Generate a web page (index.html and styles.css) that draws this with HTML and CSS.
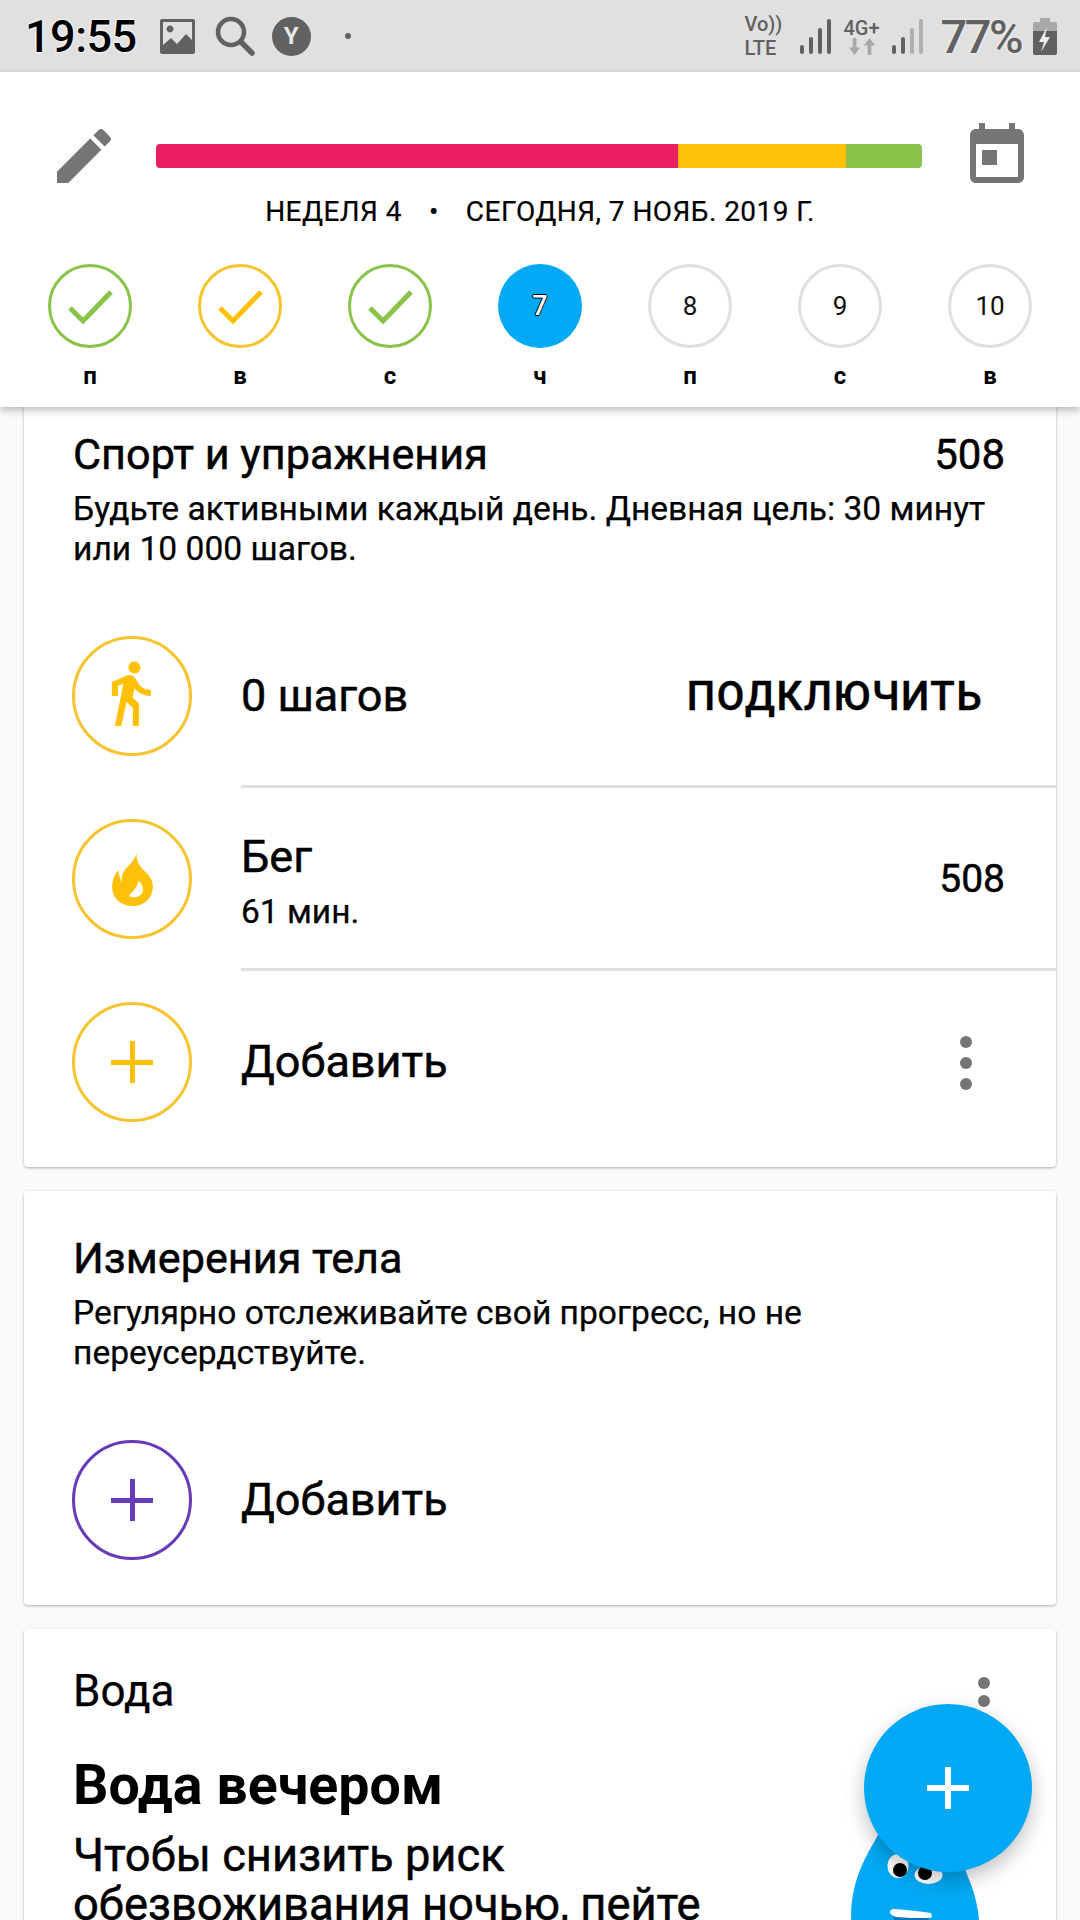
FILE: index.html
```html
<!DOCTYPE html>
<html lang="ru">
<head>
    <meta charset="UTF-8">
    <meta name="viewport" content="width=device-width, initial-scale=1.0">
    <title>Дневник</title>
    <link rel="stylesheet" href="styles.css">
</head>
<body>
    <div class="statusbar">
        <div class="status-left">
            <span class="time">19:55</span>
            <svg class="st-img" viewBox="0 0 35 35"><path fill="#616161" fill-rule="evenodd" d="M2 0h31a2 2 0 0 1 2 2v31a2 2 0 0 1-2 2H2a2 2 0 0 1-2-2V2a2 2 0 0 1 2-2zM3 3v23l8-7 6 6 9-10 6 6V3zM10 6.500a3.500 3.500 0 1 0 .01 0z"/></svg>
            <svg class="st-search" viewBox="0 0 40 40"><circle cx="16" cy="16" r="13" fill="none" stroke="#616161" stroke-width="4.500"/><path d="M26 26l11 11" stroke="#616161" stroke-width="5.500" stroke-linecap="round"/></svg>
            <span class="st-y">Y</span>
            <span class="st-dot"></span>
        </div>
        <div class="status-right">
            <span class="volte">Vo))<br>LTE</span>
            <svg class="st-signal" viewBox="0 0 31 35"><g fill="#616161"><rect x="0" y="26" width="4" height="9" rx="2"/><rect x="9" y="18" width="4" height="17" rx="2"/><rect x="18" y="9" width="4" height="26" rx="2"/><rect x="27" y="0" width="4" height="35" rx="2"/></g></svg>
            <span class="net">4G+<svg viewBox="0 0 30 18"><path fill="#a8a8a8" d="M5 0h4v10h4l-6 8-6-8h4zM21 18h4V8h4l-6-8-6 8h4z"/></svg></span>
            <svg class="st-signal" viewBox="0 0 31 35"><g fill="#616161"><rect x="0" y="26" width="4" height="9" rx="2"/><rect x="9" y="18" width="4" height="17" rx="2"/></g><g fill="#b0b0b0"><rect x="18" y="9" width="4" height="26" rx="2"/><rect x="27" y="0" width="4" height="35" rx="2"/></g></svg>
            <span class="percent">77%</span>
            <svg class="st-batt" viewBox="0 0 24 37"><path fill="#a8a8a8" d="M7 0h10v4h5a2 2 0 0 1 2 2v8H0V6a2 2 0 0 1 2-2h5z"/><path fill="#616161" d="M0 13h24v22a2 2 0 0 1-2 2H2a2 2 0 0 1-2-2z"/><path fill="#eee" d="M14 9l-8 15h5l-3 10 9-15h-5z"/></svg>
        </div>
    </div>

    <header class="header">
        <div class="progress-row">
            <svg class="pencil" viewBox="0 0 24 24"><path fill="#757575" d="M3 17.250V21h3.750L17.810 9.940l-3.750-3.750L3 17.250zM20.710 7.040c.39-.39.39-1.020 0-1.410l-2.340-2.340c-.39-.39-1.020-.39-1.410 0l-1.830 1.830 3.750 3.750 1.830-1.830z"/></svg>
            <div class="progress">
                <div class="seg seg-red"></div>
                <div class="seg seg-yellow"></div>
                <div class="seg seg-green"></div>
            </div>
            <svg class="calendar" viewBox="0 0 24 24"><path fill="#757575" d="M7 10h5v5H7zM16 1v2H8V1H6v2H5c-1.110 0-1.990.9-1.990 2L3 19c0 1.100.89 2 2 2h14c1.100 0 2-.9 2-2V5c0-1.100-.9-2-2-2h-1V1h-2zm3 18H5V8h14v11z"/></svg>
        </div>
        <div class="week-line"><span>НЕДЕЛЯ 4</span><span class="bullet">•</span><span>СЕГОДНЯ, 7 НОЯБ. 2019 Г.</span></div>
        <div class="days">
            <div class="day"><div class="circle c-green"><svg viewBox="0 0 84 84"><path d="M22 44l13 13 28-29" fill="none" stroke="#8bc34a" stroke-width="5"/></svg></div><span class="day-name">п</span></div>
            <div class="day"><div class="circle c-yellow"><svg viewBox="0 0 84 84"><path d="M22 44l13 13 28-29" fill="none" stroke="#ffc107" stroke-width="5"/></svg></div><span class="day-name">в</span></div>
            <div class="day"><div class="circle c-green"><svg viewBox="0 0 84 84"><path d="M22 44l13 13 28-29" fill="none" stroke="#8bc34a" stroke-width="5"/></svg></div><span class="day-name">с</span></div>
            <div class="day"><div class="circle c-today">7</div><span class="day-name">ч</span></div>
            <div class="day"><div class="circle">8</div><span class="day-name">п</span></div>
            <div class="day"><div class="circle">9</div><span class="day-name">с</span></div>
            <div class="day"><div class="circle">10</div><span class="day-name">в</span></div>
        </div>
    </header>

    <main class="content">
        <section class="card card-sport">
            <div class="card-head">
                <h2>Спорт и упражнения</h2>
                <span class="score">508</span>
            </div>
            <p class="desc">Будьте активными каждый день. Дневная цель: 30 минут<br>или 10 000 шагов.</p>
            <div class="rows">
                <div class="row">
                    <div class="round"><svg class="walk" viewBox="0.700 1 24 24"><path fill="#ffc107" d="M13.500 5.500c1.100 0 2-.9 2-2s-.9-2-2-2-2 .9-2 2 .9 2 2 2zM9.800 8.900L7 23h2.100l1.800-8 2.100 2v6h2v-7.500l-2.100-2 .6-3C14.800 12 16.800 13 19 13v-2c-1.900 0-3.500-1-4.300-2.400l-1-1.600c-.4-.6-1-1-1.700-1-.3 0-.5.1-.8.1L6 8.300V13h2V9.600l1.800-.7"/></svg></div>
                    <div class="row-body line">
                        <span class="row-title">0 шагов</span>
                        <span class="connect">ПОДКЛЮЧИТЬ</span>
                    </div>
                </div>
                <div class="row">
                    <div class="round"><svg class="flame" viewBox="5 22 123 160"><path fill="#ffc107" fill-rule="evenodd" d="M78 22C74 50 45 62 36 88c-4 12-2 20 0 26-6-10-10-24-12-40C10 90 5 108 5 125c0 33 25 57 61 57s62-24 62-60c0-27-23-42-36-57-10-13-14-27-14-43zM85 105c-3 20-17 33-30 47 15 6 33 6 41-10 6-14-1-27-11-37z"/></svg></div>
                    <div class="row-body line">
                        <div class="row-text">
                            <span class="row-title">Бег</span>
                            <span class="row-sub">61 мин.</span>
                        </div>
                        <span class="row-score">508</span>
                    </div>
                </div>
                <div class="row">
                    <div class="round"><span class="plus"></span></div>
                    <div class="row-body">
                        <span class="row-title">Добавить</span>
                        <span class="dots"><i></i><i></i><i></i></span>
                    </div>
                </div>
            </div>
        </section>

        <section class="card card-body">
            <div class="card-head">
                <h2>Измерения тела</h2>
            </div>
            <p class="desc">Регулярно отслеживайте свой прогресс, но не<br>переусердствуйте.</p>
            <div class="rows">
                <div class="row">
                    <div class="round r-purple"><span class="plus"></span></div>
                    <div class="row-body">
                        <span class="row-title">Добавить</span>
                    </div>
                </div>
            </div>
        </section>

        <section class="card card-water">
            <div class="water-head">
                <span class="water-name">Вода</span>
                <span class="dots dots-water"><i></i><i></i><i></i></span>
            </div>
            <h3>Вода вечером</h3>
            <p class="water-text">Чтобы снизить риск<br>обезвоживания ночью, пейте</p>
            <svg class="mascot" viewBox="0 0 128 180">
                <path fill="#03a9f4" d="M64 0C40 0 30 35 27 45 18 62 1 85 0 125c0 35 30 55 64 55s64-20 64-50c-1-15-6-32-11-43C108 60 88 0 64 0z"/>
                <ellipse cx="47" cy="76" rx="10.500" ry="12" fill="#fff"/>
                <ellipse cx="77.500" cy="85" rx="14" ry="9" fill="#fff"/>
                <circle cx="49" cy="80" r="7" fill="#000"/>
                <circle cx="74" cy="83" r="7" fill="#000"/>
                <path fill="#0277bd" d="M42 126l36 2-4 12H46z"/>
                <path fill="#fff" d="M39 122c0-2 2-3 4-3 13 1 26 2 37 4l1 4c-1 1-2 1-3 1-12 0-24 0-33-1-3-1-6-3-6-5z"/>
            </svg>
        </section>
    </main>

    <button class="fab"><span class="plus"></span></button>
</body>
</html>
```
FILE: styles.css
```css
html, body {
    margin: 0;
    padding: 0;
}
body {
    position: relative;
    width: 1080px;
    height: 1920px;
    overflow: hidden;
    background: #fafafa;
    font-family: Roboto, "Noto Sans", sans-serif;
    color: #000;
}
svg {
    display: block;
}

/* status bar */
.statusbar {
    height: 72px;
    background: #e0e0e0;
    display: flex;
    justify-content: space-between;
    align-items: center;
    padding: 0 23px 0 25px;
    box-sizing: border-box;
}
.status-left, .status-right {
    display: flex;
    align-items: center;
}
.time {
    font-size: 45px;
    font-weight: 500;
    letter-spacing: -0.5px;
    text-shadow: 0 0 3px #fff, 0 0 2px #fff;
    margin-right: 23px;
}
.st-img {
    width: 35px;
    height: 35px;
    margin-right: 20px;
}
.st-search {
    width: 40px;
    height: 40px;
    margin-right: 17px;
}
.st-y {
    width: 39px;
    height: 39px;
    border-radius: 50%;
    background: #616161;
    color: #e8e8e8;
    font-size: 24px;
    font-weight: 700;
    line-height: 39px;
    text-align: center;
    margin-right: 34px;
}
.st-dot {
    width: 6px;
    height: 6px;
    border-radius: 50%;
    background: #616161;
}
.volte {
    font-size: 20px;
    line-height: 24px;
    font-weight: 500;
    color: #616161;
    margin-right: 20px;
    width: 36px;
}
.st-signal {
    width: 31px;
    height: 35px;
}
.net {
    font-size: 20px;
    line-height: 20px;
    font-weight: 500;
    color: #616161;
    margin: 0 12px 0 12px;
    width: 37px;
}
.net svg {
    width: 28px;
    height: 17px;
    margin: 0 auto;
}
.percent {
    font-size: 47px;
    font-weight: 500;
    letter-spacing: -2.5px;
    color: #616161;
    text-shadow: 0 0 3px #fff;
    margin: 0 12px 0 17px;
}
.st-batt {
    width: 24px;
    height: 37px;
}

/* top panel */
.header {
    position: relative;
    z-index: 2;
    height: 335px;
    box-sizing: border-box;
    padding-top: 48px;
    background: #fff;
    box-shadow: 0 3px 8px rgba(0, 0, 0, .28);
}
.progress-row {
    display: flex;
    align-items: center;
    padding: 0 47px 0 48px;
}
.pencil, .calendar {
    width: 72px;
    height: 72px;
    flex: none;
}
.progress {
    flex: 1;
    display: flex;
    height: 24px;
    margin: 0 39px 0 36px;
    border-radius: 4px;
    overflow: hidden;
}
.seg-red {
    width: 522px;
    background: #e91e63;
}
.seg-yellow {
    width: 168px;
    background: #ffc107;
}
.seg-green {
    flex: 1;
    background: #8bc34a;
}
.week-line {
    display: flex;
    justify-content: center;
    font-size: 28px;
    line-height: 40px;
    letter-spacing: .45px;
    -webkit-text-stroke: .2px #000;
}
.bullet {
    margin: 0 27px;
}
.days {
    display: grid;
    grid-template-columns: repeat(7, 150px);
    padding: 32px 15px 0;
}
.day {
    display: flex;
    flex-direction: column;
    align-items: center;
}
.circle {
    width: 84px;
    height: 84px;
    box-sizing: border-box;
    border: 3px solid #e0e0e0;
    border-radius: 50%;
    display: flex;
    align-items: center;
    justify-content: center;
    font-size: 26px;
    color: #111;
}
.circle svg {
    flex: none;
    width: 84px;
    height: 84px;
}
.c-green {
    border-color: #8bc34a;
}
.c-yellow {
    border-color: #f7c32f;
}
.c-today {
    border: 0;
    background: #03a9f4;
    color: #fff;
    font-size: 27px;
    font-weight: 500;
    text-shadow: 1px 0 #000, -1px 0 #000, 0 1px #000, 0 -1px #000;
}
.day-name {
    margin-top: 13px;
    font-size: 24px;
    line-height: 30px;
    font-weight: 700;
}

/* cards */
.content {
    margin-top: -30px;
    padding: 0 24px;
}
.card {
    position: relative;
    background: #fff;
    border-radius: 4px;
    box-shadow: 0 1px 3px rgba(0, 0, 0, .3);
    margin-bottom: 24px;
    box-sizing: border-box;
}
.card-sport {
    padding-top: 53px;
    height: 790px;
}
.card-body {
    height: 414px;
    padding-top: 43px;
}
.card-water {
    height: 340px;
    padding-top: 37px;
}
.card-head {
    display: flex;
    justify-content: space-between;
    padding: 0 51px 0 49px;
    font-size: 43.200px;
    line-height: 50px;
    -webkit-text-stroke: .5px #000;
}
.card-head h2 {
    margin: 0;
    font: inherit;
}
.score {
    font-size: 42px;
}
.desc {
    margin: 9px 0 0;
    padding: 0 49px;
    font-size: 33.600px;
    line-height: 40px;
    -webkit-text-stroke: .25px #000;
}
.rows {
    margin-top: 35.500px;
}
.row {
    display: flex;
    align-items: center;
    height: 183px;
    padding-left: 48px;
}
.round {
    flex: none;
    width: 120px;
    height: 120px;
    box-sizing: border-box;
    border-radius: 50%;
    border: 3px solid #f7c32f;
    display: flex;
    align-items: center;
    justify-content: center;
    margin-right: 49px;
}
.r-purple {
    border-color: #673ab7;
}
.walk {
    width: 72px;
    height: 72px;
}
.flame {
    width: 41px;
    height: 53px;
}
.plus {
    display: block;
    width: 42px;
    height: 42px;
    background: linear-gradient(#ffc107, #ffc107) center / 100% 5px no-repeat,
                linear-gradient(#ffc107, #ffc107) center / 5px 100% no-repeat;
}
.r-purple .plus {
    background: linear-gradient(#673ab7, #673ab7) center / 100% 5px no-repeat,
                linear-gradient(#673ab7, #673ab7) center / 5px 100% no-repeat;
}
.row-body {
    flex: 1;
    align-self: stretch;
    display: flex;
    align-items: center;
    justify-content: space-between;
    padding-right: 51px;
}
.line {
    border-bottom: 3px solid #e0e0e0;
    padding-top: 3px;
    box-sizing: border-box;
}
.row-title {
    display: block;
    font-size: 45px;
    line-height: 50px;
    -webkit-text-stroke: .5px #000;
}
.row-text {
    margin-top: 5px;
}
.row-sub {
    display: block;
    font-size: 33.500px;
    line-height: 38px;
    margin-top: 11px;
    -webkit-text-stroke: .25px #000;
}
.connect {
    font-size: 40px;
    font-weight: 500;
    letter-spacing: 1.500px;
    margin-right: 22px;
    -webkit-text-stroke: .5px #000;
}
.row-score {
    font-size: 39px;
    -webkit-text-stroke: .5px #000;
}
.dots {
    display: flex;
    flex-direction: column;
    gap: 9px;
    margin: 2px 33px 0 0;
}
.dots i {
    display: block;
    width: 12px;
    height: 12px;
    border-radius: 50%;
    background: #757575;
}
.water-head {
    display: flex;
    justify-content: space-between;
    align-items: flex-start;
    padding: 0 66px 0 49px;
}
.water-name {
    font-size: 44px;
    line-height: 50px;
    -webkit-text-stroke: .25px #000;
}
.dots-water {
    gap: 6px;
    margin: 11px 0 0;
}
.card-water h3 {
    margin: 31px 0 0;
    padding: 0 49px;
    font-size: 55.500px;
    line-height: 60px;
    font-weight: 700;
}
.water-text {
    margin: 14.500px 0 0;
    padding: 0 49px;
    font-size: 45.300px;
    line-height: 49px;
    -webkit-text-stroke: .5px #000;
}
.mascot {
    position: absolute;
    left: 827px;
    top: 161px;
    width: 128px;
    height: 180px;
}

/* floating button */
.fab {
    position: absolute;
    left: 864px;
    top: 1704px;
    z-index: 3;
    width: 168px;
    height: 168px;
    padding: 0;
    border: 0;
    border-radius: 50%;
    background: #03a9f4;
    box-shadow: 0 8px 20px rgba(0, 0, 0, .25);
    display: flex;
    align-items: center;
    justify-content: center;
}
.fab .plus {
    background: linear-gradient(#fff, #fff) center / 100% 6px no-repeat,
                linear-gradient(#fff, #fff) center / 6px 100% no-repeat;
}
```
